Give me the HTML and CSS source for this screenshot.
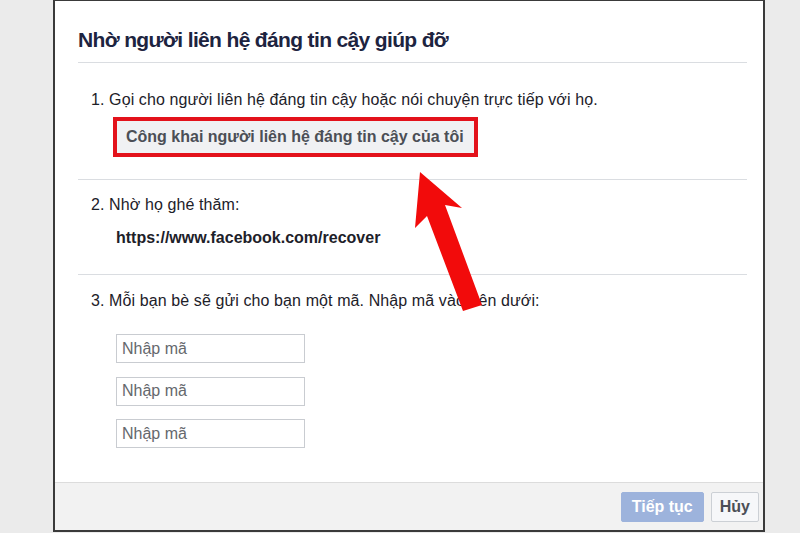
FILE: index.html
```html
<!DOCTYPE html>
<html lang="vi">
<head>
<meta charset="utf-8">
<title>Nhờ người liên hệ đáng tin cậy giúp đỡ</title>
<link rel="stylesheet" href="styles.css">
</head>
<body>
<div class="dialog">
  <div class="header">
    <h1 class="title">Nhờ người liên hệ đáng tin cậy giúp đỡ</h1>
  </div>
  <div class="content">
    <div class="section s1">
      <p class="step">1. Gọi cho người liên hệ đáng tin cậy hoặc nói chuyện trực tiếp với họ.</p>
      <div class="highlight"><span class="pill">Công khai người liên hệ đáng tin cậy của tôi</span></div>
    </div>
    <div class="section s2">
      <p class="step">2. Nhờ họ ghé thăm:</p>
      <p class="url">https://www.facebook.com/recover</p>
    </div>
    <div class="section s3">
      <p class="step">3. Mỗi bạn bè sẽ gửi cho bạn một mã. Nhập mã vào bên dưới:</p>
      <div class="codes">
        <input class="code" type="text" placeholder="Nhập mã">
        <input class="code" type="text" placeholder="Nhập mã">
        <input class="code" type="text" placeholder="Nhập mã">
      </div>
    </div>
  </div>
  <div class="footer">
    <button class="btn primary" type="button">Tiếp tục</button>
    <button class="btn secondary" type="button">Hủy</button>
  </div>
</div>
<svg class="arrow" viewBox="0 0 800 533" width="800" height="533" aria-hidden="true">
  <polygon points="420,172 462,208 445,205 482,305 463,311 427,216 415,228" fill="#f20b0b"/>
</svg>
</body>
</html>
```

FILE: styles.css
```css
html, body {
  margin: 0;
  padding: 0;
}
body {
  width: 800px;
  height: 533px;
  background: #ebebeb;
  font-family: "Liberation Sans", Arial, sans-serif;
  color: #1d2129;
  position: relative;
  overflow: hidden;
}
.dialog {
  margin-left: 53px;
  width: 712px;
  height: 532px;
  box-sizing: border-box;
  border: 2px solid #3a3a3a;
  border-top-width: 1px;
  background: #ffffff;
  display: flex;
  flex-direction: column;
}
.header {
  margin: 0 16px 0 23px;
  padding: 27px 0 10px;
  border-bottom: 1px solid #dadde1;
}
.title {
  margin: 0;
  font-size: 21px;
  line-height: 24px;
  letter-spacing: -0.65px;
  font-weight: bold;
  color: #1d2440;
}
.content {
  flex: 1;
  margin: 0 16px 0 23px;
}
.section {
  border-bottom: 1px solid #dadde1;
}
.section.s3 {
  border-bottom: none;
}
.step {
  margin: 0;
  padding-left: 13px;
  font-size: 16px;
  line-height: 20px;
  letter-spacing: 0.1px;
  color: #1d2129;
}
.s1 {
  padding: 27px 0 22px;
}
.highlight {
  display: inline-flex;
  margin: 7px 0 0 35px;
  border: 4px solid #e3121b;
}
.pill {
  display: block;
  height: 32px;
  line-height: 32px;
  padding: 0 10px 0 9px;
  background: #f0f1f3;
  font-size: 16px;
  font-weight: bold;
  color: #4b4f56;
}
.s2 {
  padding: 15px 0 26px;
}
.url {
  margin: 13px 0 0;
  padding-left: 38px;
  font-size: 16px;
  line-height: 20px;
  font-weight: bold;
  color: #1d2129;
}
.s3 {
  padding-top: 16px;
}
.codes {
  display: flex;
  flex-direction: column;
  gap: 13.5px;
  margin: 23px 0 0 38px;
}
.code {
  width: 189px;
  height: 29px;
  box-sizing: border-box;
  margin: 0;
  border: 1px solid #c9ccd1;
  border-radius: 0;
  padding: 0 5px;
  font-family: "Liberation Sans", Arial, sans-serif;
  font-size: 16px;
  color: #1d2129;
  background: #ffffff;
  outline: none;
}
.code::placeholder {
  color: #65686d;
  opacity: 1;
}
.footer {
  height: 48px;
  box-sizing: border-box;
  border-top: 1px solid #dcdcdc;
  background: #f2f2f2;
  display: flex;
  justify-content: flex-end;
  align-items: flex-start;
  gap: 7px;
  padding: 9px 4px 0 0;
}
.btn {
  height: 30px;
  box-sizing: border-box;
  margin: 0;
  font-family: "Liberation Sans", Arial, sans-serif;
  font-size: 16px;
  font-weight: bold;
  border-radius: 2px;
  cursor: default;
}
.btn.primary {
  padding: 0 10px;
  border: 1px solid #9db3dc;
  background: #9db3dc;
  color: #ffffff;
}
.btn.secondary {
  padding: 0 8px;
  border: 1px solid #ccd0d5;
  background: #f6f7f9;
  color: #4b4f56;
}
.arrow {
  position: absolute;
  left: 0;
  top: 0;
  pointer-events: none;
}
```
